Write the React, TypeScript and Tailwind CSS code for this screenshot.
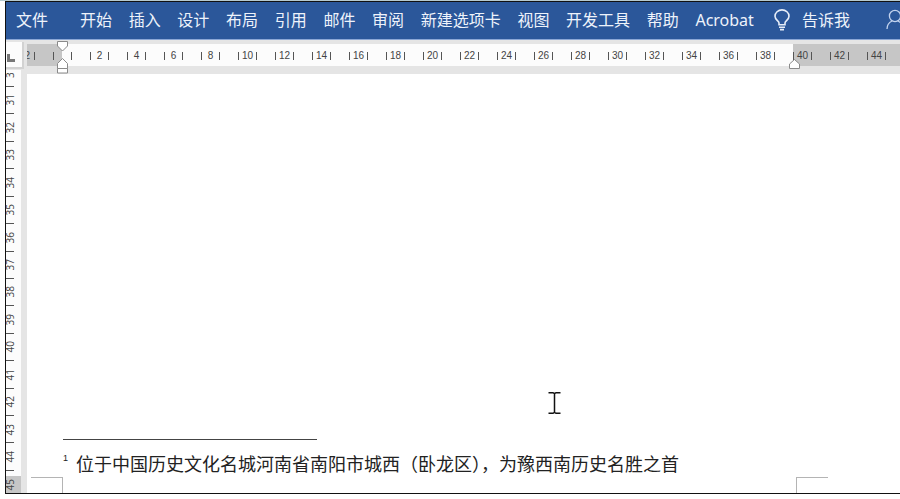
import React from "react";

const tabs = [
  "开始",
  "插入",
  "设计",
  "布局",
  "引用",
  "邮件",
  "审阅",
  "新建选项卡",
  "视图",
  "开发工具",
  "帮助",
  "Acrobat",
];

const columns = Array.from({ length: 22 }, (_, i) => (i + 1) * 2);
const rows = Array.from({ length: 14 }, (_, i) => i + 31);

const cellColor = (n: number) => {
  if (n > 40) return "bg-[#c6c6c6]";
  if (n === 40) return "bg-linear-to-r from-[#fcfcfc] from-25% to-[#c6c6c6] to-25%";
  return "";
};

const Tick = () => <span className="h-2 w-px shrink-0 bg-[#555555]"></span>;

const BulbIcon = () => (
  <svg width="16" height="22" viewBox="0 0 16 22" fill="none" stroke="#e6edf8" strokeWidth="1.6">
    <path d="M5 15.8 V14 C5 12 1 10.8 1 7.2 A7 6.3 0 0 1 15 7.2 C15 10.8 11 12 11 14 V15.8 Z" />
    <path d="M5 18.2 H11 M6 20.6 H10" />
  </svg>
);

const PersonIcon = () => (
  <svg className="shrink-0" width="20" height="22" viewBox="0 0 20 22" fill="none" stroke="#c3d3ee" strokeWidth="1.3">
    <circle cx="9" cy="7" r="5.6" />
    <path d="M1 20 C1 15.5 3 13.4 6 12 M12 12 C15 13.4 17 15.5 17 20" />
  </svg>
);

const MenuBar = () => (
  <nav className="flex h-[38px] items-center border-b border-[#8ba7d6] bg-[#2b579a] pb-[2px] pl-[10px] text-[16px] leading-6 text-[#eef3fb]">
    <button className="mr-8 shrink-0">文件</button>
    <div className="flex flex-1 justify-between">
      {tabs.map((tab) => (
        <button key={tab} className="shrink-0 whitespace-nowrap">
          {tab}
        </button>
      ))}
    </div>
    <button className="ml-5 flex shrink-0 items-center gap-3">
      <BulbIcon />
      <span>告诉我</span>
    </button>
    <button className="ml-9 flex w-[14px] shrink-0 overflow-hidden" aria-label="共享">
      <PersonIcon />
    </button>
  </nav>
);

const HorizontalRuler = () => (
  <div className="relative h-[34px] overflow-hidden bg-[#e5e5e5] pt-1 pb-2">
    <div className="flex h-[22px] bg-[#fcfcfc] font-['Liberation_Sans'] text-[10px] leading-3 text-[#444444]">
      <div className="flex w-[17px] shrink-0 items-center justify-end gap-1 overflow-hidden bg-[#c6c6c6] pt-[2px] pr-[9px]">
        <span>2</span>
        <Tick />
      </div>
      <div className="flex w-[37px] shrink-0 items-center justify-between bg-linear-to-r from-[#c6c6c6] from-50% to-[#fcfcfc] to-50% px-[9px] pt-[2px]">
        <Tick />
        <Tick />
      </div>
      {columns.map((n) => (
        <div
          key={n}
          className={`flex w-[37px] shrink-0 items-center justify-between px-[9px] pt-[2px] ${cellColor(n)}`}
        >
          <Tick />
          <span>{n}</span>
          <Tick />
        </div>
      ))}
      <div className="flex-1 bg-[#c6c6c6]"></div>
    </div>
    {/* indent markers */}
    <svg
      className="absolute top-0 left-[29px]"
      width="13"
      height="34"
      viewBox="0 0 13 34"
      fill="#ffffff"
      stroke="#8a8a8a"
    >
      <path d="M1.5 1.5 H11.5 V6 L6.5 11 L1.5 6 Z" />
      <path d="M1.5 28.5 V23.5 L6.5 18.5 L11.5 23.5 V28.5 Z" />
      <path d="M1.5 28.5 H11.5 V33 H1.5 Z" />
    </svg>
    <svg
      className="absolute top-[18px] left-[761px]"
      width="13"
      height="12"
      viewBox="0 0 13 12"
      fill="#ffffff"
      stroke="#8a8a8a"
    >
      <path d="M1.5 10.5 V6 L6.5 1.5 L11.5 6 V10.5 Z" />
    </svg>
  </div>
);

const VerticalRuler = () => (
  <div className="flex w-[15px] flex-col bg-[#fcfcfc] font-['Open_Sans'] text-[10px] leading-[8px] text-[#444444]">
    <div className="flex h-4 items-start overflow-hidden">
      <span className="h-2 rotate-180 [writing-mode:vertical-rl]">3</span>
    </div>
    <div className="flex flex-1 flex-col">
      {rows.map((n) => (
        <div key={n} className="flex flex-1 flex-col">
          <span className="h-px w-2 shrink-0 bg-[#555555]"></span>
          <div className="flex flex-1 items-center">
            <span className="rotate-180 [writing-mode:vertical-rl]">{n}</span>
          </div>
        </div>
      ))}
    </div>
    <div className="h-[6px]">
      <span className="block h-px w-2 bg-[#555555]"></span>
    </div>
    <div className="flex h-[17px] items-center bg-[#c6c6c6]">
      <span className="rotate-180 [writing-mode:vertical-rl]">45</span>
    </div>
  </div>
);

const Page = () => (
  <main className="relative flex flex-1 flex-col justify-end bg-white">
    <div className="pl-9 text-[#222222]">
      <hr className="w-[254px] border-t border-[#444444]" />
      <p className="mt-3 flex gap-2 text-[18px] leading-6">
        <sup className="top-0 font-['Liberation_Sans'] text-[9px] leading-3">1</sup>
        <span className="whitespace-nowrap">
          位于中国历史文化名城河南省南阳市城西（卧龙区），为豫西南历史名胜之首
        </span>
      </p>
    </div>
    {/* margin corners */}
    <div className="mt-[1px] flex pl-1">
      <div className="h-4 w-8 border-t border-r border-[#b4b4b4]"></div>
      <div className="ml-[733px] h-4 w-8 border-t border-l border-[#b4b4b4]"></div>
    </div>
    {/* text cursor */}
    <svg
      className="absolute bottom-[78px] left-[521px]"
      width="13"
      height="24"
      viewBox="0 0 13 24"
      fill="none"
      stroke="#111111"
      strokeWidth="1.5"
    >
      <path d="M0.5 1.7 H5 L6.5 2.6 L8 1.7 H12.5 M6.5 2 V22 M0.5 22.3 H5 L6.5 21.4 L8 22.3 H12.5" />
    </svg>
  </main>
);

const App = () => {
  return (
    <div className="flex min-h-screen flex-col overflow-hidden border-t border-[#b5c9cf] bg-white pb-[5px] pl-[5px] font-['Noto_Sans','Noto_Sans_CJK_SC',sans-serif]">
      <div className="flex flex-1 flex-col border-t border-b border-l border-[#111111]">
        <MenuBar />
        <div className="flex flex-1">
          <div className="flex w-[21px] shrink-0 flex-col bg-[#e5e5e5]">
            <div className="h-[30px] pt-[2px]">
              <div className="flex h-[27px] w-[18px] items-end border-r-2 border-b-2 border-[#d2d2d2] bg-[#fcfcfc] pb-[5px] pl-px">
                <span className="h-2 w-2 border-b-[3px] border-l-[3px] border-[#777777]"></span>
              </div>
            </div>
            <div className="flex flex-1">
              <VerticalRuler />
            </div>
          </div>
          <div className="flex min-w-0 flex-1 flex-col">
            <HorizontalRuler />
            <Page />
          </div>
        </div>
      </div>
    </div>
  );
};

export default App;
